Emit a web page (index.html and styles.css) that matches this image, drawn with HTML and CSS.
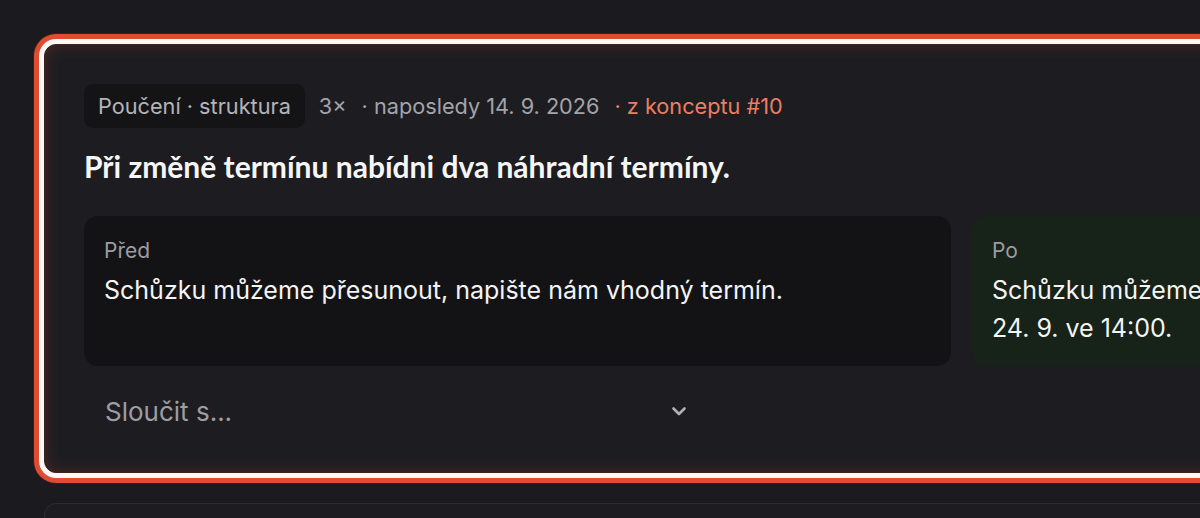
FILE: index.html
```html
<!DOCTYPE html>
<html lang="cs">
<head>
    <meta charset="UTF-8">
    <meta name="viewport" content="width=device-width, initial-scale=1.0">
    <title>Poučení</title>
    <link rel="stylesheet" href="styles.css">
</head>
<body>
    <div class="list">
        <div class="lesson-card selected">
            <div class="meta">
                <span class="tag">Poučení · struktura</span>
                <span class="count">3×</span>
                <span class="last">· naposledy 14. 9. 2026</span>
                <span class="source">· z konceptu #10</span>
            </div>
            <h2 class="lesson-title">Při změně termínu nabídni dva náhradní termíny.</h2>
            <div class="compare">
                <div class="compare-box before">
                    <div class="compare-label">Před</div>
                    <div class="compare-text">Schůzku můžeme přesunout, napište nám vhodný termín.</div>
                </div>
                <div class="compare-box after">
                    <div class="compare-label">Po</div>
                    <div class="compare-text">Schůzku můžeme přesunout na středu 23. 9. v 10:00 nebo<br>24. 9. ve 14:00.</div>
                </div>
            </div>
            <div class="merge-select">
                <span>Sloučit s...</span>
                <svg class="chevron" width="16" height="16" viewBox="0 0 16 16">
                    <path d="M2.5 5.5 L8 11 L13.5 5.5" fill="none" stroke="currentColor" stroke-width="2.6" stroke-linecap="round" stroke-linejoin="round"/>
                </svg>
            </div>
        </div>
        <div class="lesson-card"></div>
    </div>
</body>
</html>
```

FILE: styles.css
```css
body {
    margin: 0;
    padding: 0;
    background-color: #1b1b1f;
    font-family: Inter, "Noto Sans", sans-serif;
    color: #f2f2f2;
    overflow: hidden;
    height: 518px;
}

.list {
    padding: 44px 0 0 44px;
    display: flex;
    flex-direction: column;
    gap: 30px;
    width: 1835px;
}

.lesson-card {
    background-color: #1d1d21;
    border: 1px solid #2c2c31;
    border-radius: 12px;
    padding: 39px 39px 36px;
    min-height: 60px;
}

.lesson-card.selected {
    border-color: #3a2420;
    box-shadow: inset 0 0 16px rgba(200, 70, 45, 0.25), 0 0 0 5px #fff8f4, 0 0 0 10px #e14b31, 0 0 0 11px rgba(90, 30, 20, 0.6);
}

.meta {
    display: flex;
    align-items: center;
    font-size: 21.7px;
    color: #a3a3aa;
}

.tag {
    background-color: #141417;
    color: #b4b4ba;
    border-radius: 9px;
    padding: 0 14px;
    height: 44px;
    line-height: 44px;
    margin-right: 14px;
}

.count {
    margin-right: 15px;
}

.last {
    margin-right: 15px;
}

.source {
    color: #ec7e61;
}

.lesson-title {
    font-family: Lato, "Noto Sans", sans-serif;
    font-weight: 700;
    font-size: 30px;
    margin: 20px 0 0;
    line-height: 36px;
    color: #f6f6f6;
}

.compare {
    display: grid;
    grid-template-columns: 1fr 1fr;
    gap: 21px;
    margin-top: 32px;
}

.compare-box {
    border-radius: 14px;
    padding: 21px 20px 19px;
}

.compare-box.before {
    background-color: #131315;
}

.compare-box.after {
    background-color: #172219;
}

.compare-label {
    font-size: 21px;
    line-height: 28px;
    color: #9c9ca3;
    margin-bottom: 6px;
}

.compare-text {
    font-size: 25px;
    line-height: 38px;
    color: #f4f4f4;
}

.merge-select {
    width: 582px;
    height: 50px;
    margin-top: 20px;
    padding: 0 20px 0 21px;
    display: flex;
    align-items: center;
    justify-content: space-between;
    font-size: 26px;
    color: #9d9da4;
}

.chevron {
    color: #b0b0b6;
}
```
